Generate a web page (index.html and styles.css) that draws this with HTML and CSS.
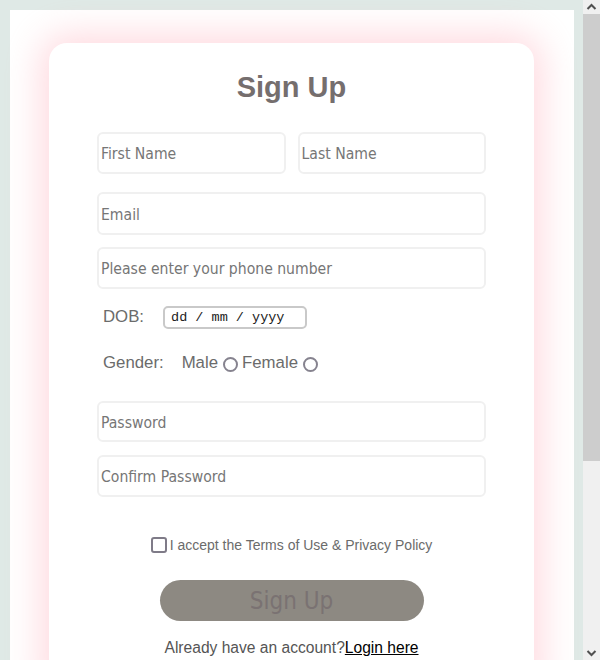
FILE: index.html
```html
<!DOCTYPE html>
<html lang="en">
<head>
<meta charset="utf-8">
<title>Sign Up</title>
<link rel="stylesheet" href="styles.css">
</head>
<body>
<div class="page">
  <form class="card">
    <h1 class="title">Sign Up</h1>
    <div class="row names">
      <input class="field" type="text" placeholder="First Name">
      <input class="field" type="text" placeholder="Last Name">
    </div>
    <input class="field email" type="email" placeholder="Email">
    <input class="field phone" type="tel" placeholder="Please enter your phone number">
    <div class="row dob">
      <span class="label">DOB:</span>
      <span class="date">dd / mm / yyyy</span>
    </div>
    <div class="row gender">
      <span class="label">Gender:</span>
      <span class="opt">Male</span><span class="radio"></span>
      <span class="opt">Female</span><span class="radio"></span>
    </div>
    <input class="field pass" type="password" placeholder="Password">
    <input class="field confirm" type="password" placeholder="Confirm Password">
    <div class="row terms">
      <span class="check"></span>
      <span>I accept the Terms of Use &amp; Privacy Policy</span>
    </div>
    <button class="submit" type="button">Sign Up</button>
    <p class="login">Already have an account?<a href="#">Login here</a></p>
  </form>
</div>
<div class="scrollbar" aria-hidden="true">
  <div class="sb-btn">
    <svg width="17" height="14" viewBox="0 0 17 14"><path d="M4.5 9 L8.5 5 L12.5 9" fill="none" stroke="#505050" stroke-width="2"/></svg>
  </div>
  <div class="sb-thumb"></div>
  <div class="sb-track"></div>
  <div class="sb-btn">
    <svg width="17" height="14" viewBox="0 0 17 14"><path d="M4.5 5 L8.5 9 L12.5 5" fill="none" stroke="#505050" stroke-width="2"/></svg>
  </div>
</div>
</body>
</html>
```
FILE: styles.css
```css
html, body {
  margin: 0;
  padding: 0;
}
body {
  background: #dfe9e6;
  font-family: "Liberation Sans", Arial, sans-serif;
}
.page {
  margin: 10px 26px 0 10px;
  background: #fff;
  padding: 33px 40px 60px 39px;
}
.card {
  background: #fff;
  border-radius: 18px;
  box-shadow: 0 0 36px 8px rgba(255, 196, 206, 0.65);
  padding: 27px 48px 40px 48px;
  display: flex;
  flex-direction: column;
}
.title {
  margin: 0 0 28px 0;
  text-align: center;
  font-size: 29px;
  line-height: 34px;
  font-weight: bold;
  color: #756e6e;
}
.row {
  display: flex;
  align-items: center;
}
.names {
  gap: 12px;
}
.names .field {
  flex: 1;
  min-width: 0;
}
.field {
  box-sizing: border-box;
  height: 42px;
  border: 2px solid #f0f0f0;
  border-radius: 6px;
  padding: 2px 2px 0 2px;
  font-family: "DejaVu Sans Condensed", "DejaVu Sans", sans-serif;
  font-size: 15.6px;
  color: #333;
  background: #fff;
  outline: none;
}
.field::placeholder {
  color: #767676;
}
.email {
  margin-top: 18px;
  height: 43px;
}
.phone {
  margin-top: 12px;
}
.dob {
  margin-top: 15px;
  padding-left: 6px;
  height: 26px;
}
.label {
  font-size: 16.8px;
  color: #6b6b6b;
}
.date {
  margin-left: 19px;
  box-sizing: border-box;
  width: 144px;
  height: 23px;
  border: 2px solid #c9c9c9;
  border-radius: 5px;
  padding: 0 0 0 6px;
  font-family: "Liberation Mono", "Courier New", monospace;
  font-size: 13.5px;
  line-height: 19px;
  color: #222;
}
.gender {
  margin-top: 20px;
  padding-left: 6px;
  height: 26px;
  color: #6b6b6b;
}
.opt {
  font-size: 16.8px;
  color: #6b6b6b;
}
.gender .label {
  margin-right: 18px;
}
.radio {
  box-sizing: border-box;
  width: 15px;
  height: 15px;
  border: 2px solid #86838f;
  border-radius: 50%;
  margin: 3px 4px 0 5px;
}
.pass {
  margin-top: 25px;
  height: 41px;
}
.confirm {
  margin-top: 13px;
}
.terms {
  margin-top: 40px;
  justify-content: center;
  gap: 3px;
  font-size: 14px;
  color: #6b6b6b;
}
.check {
  box-sizing: border-box;
  width: 16px;
  height: 16px;
  border: 2px solid #7f7b88;
  border-radius: 3px;
}
.submit {
  align-self: center;
  margin-top: 27px;
  width: 264px;
  height: 41px;
  border: none;
  border-radius: 21px;
  background: #8d8982;
  color: #7a7272;
  font-family: "DejaVu Sans Condensed", "DejaVu Sans", sans-serif;
  font-size: 24px;
  padding: 0;
}
.login {
  margin: 18px 0 0 0;
  text-align: center;
  font-size: 15.6px;
  color: #555;
}
.login a {
  color: #000;
  text-decoration: underline;
}
.scrollbar {
  position: fixed;
  top: 0;
  right: 0;
  bottom: 0;
  width: 17px;
  display: flex;
  flex-direction: column;
  background: #f0f0f0;
}
.sb-btn {
  height: 14px;
  flex: none;
  display: flex;
}
.sb-thumb {
  height: 447px;
  flex: none;
  background: #cdcdcd;
}
.sb-track {
  flex: 1;
}
```
